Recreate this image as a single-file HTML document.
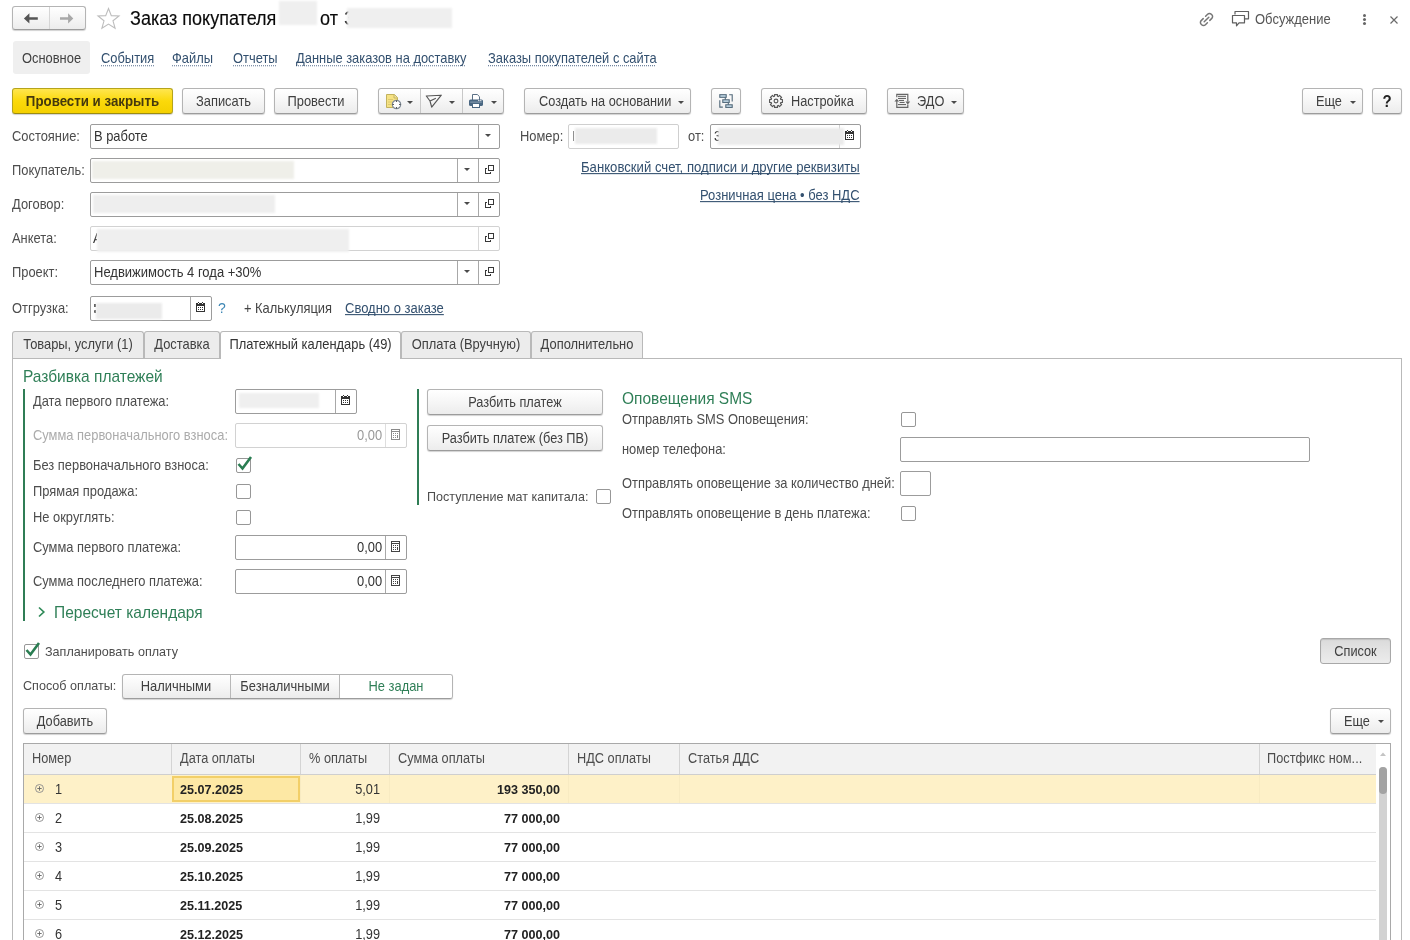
<!DOCTYPE html>
<html><head><meta charset="utf-8">
<style>
html,body{margin:0;padding:0;}
body{width:1410px;height:940px;overflow:hidden;background:#fff;position:relative;font-family:"Liberation Sans",sans-serif;font-size:12.9px;color:#4d4d4d;}
.a{position:absolute;}
.t{position:absolute;white-space:nowrap;line-height:15px;height:15px;}
.lk{color:#33506f;}
.dot{text-decoration:underline dotted #5a7090;text-decoration-thickness:1px;text-underline-offset:2px;text-decoration-skip-ink:none;}
.ul{text-decoration:underline;text-underline-offset:1px;text-decoration-skip-ink:none;}
.btn{position:absolute;box-sizing:border-box;padding-top:1px;border:1px solid #b4b4b4;border-bottom-color:#9c9c9c;border-radius:3px;background:linear-gradient(#ffffff,#f6f6f6 50%,#ececec);box-shadow:0 1px 1px rgba(0,0,0,.18);text-align:center;line-height:23px;color:#404040;white-space:nowrap;}
.fld{position:absolute;box-sizing:border-box;border:1px solid #9c9c9c;border-radius:2px;background:#fff;}
.dis{border-color:#d2d2d2;}
.blur{position:absolute;background:#ececec;filter:blur(1px);}
.cb{position:absolute;box-sizing:border-box;width:15px;height:15px;border:1px solid #979797;border-radius:2px;background:#fff;}
.dd{position:absolute;width:0;height:0;border-left:3px solid transparent;border-right:3px solid transparent;border-top:3px solid #4a4a4a;margin-left:1px;}
.vl{position:absolute;width:1px;background:#a8a8a8;}
.grn{color:#2f7f57;}
.tab{position:absolute;box-sizing:border-box;top:331px;height:27px;border:1px solid #b9b9b9;border-bottom:none;border-radius:3px 3px 0 0;background:#ececec;line-height:26px;text-align:center;color:#404040;white-space:nowrap;}
.b{font-weight:bold;}
.t{transform:scaleY(1.08);transform-origin:0 12px;}
.s{display:inline-block;transform:scaleY(1.08);transform-origin:50% 70%;}
</style></head><body>
<svg width="0" height="0" style="position:absolute">
<symbol id="open" viewBox="0 0 12 12"><g fill="#383838" shape-rendering="crispEdges"><rect x="4" y="1" width="6" height="1"/><rect x="4" y="6" width="6" height="1"/><rect x="4" y="1" width="1" height="6"/><rect x="9" y="1" width="1" height="6"/><rect x="1" y="4" width="2" height="1"/><rect x="1" y="4" width="1" height="6"/><rect x="1" y="9" width="6" height="1"/><rect x="6" y="8" width="1" height="2"/></g></symbol>
<symbol id="cal" viewBox="0 0 12 12"><g fill="#333" shape-rendering="crispEdges"><rect x="1" y="2" width="9" height="3"/><rect x="1" y="5" width="1" height="6"/><rect x="9" y="5" width="1" height="6"/><rect x="1" y="10" width="9" height="1"/><rect x="3" y="1" width="1" height="1"/><rect x="7" y="1" width="1" height="1"/><rect x="3" y="6" width="1" height="1"/><rect x="5" y="6" width="1" height="1"/><rect x="7" y="6" width="1" height="1"/><rect x="3" y="8" width="1" height="1"/><rect x="5" y="8" width="1" height="1"/><rect x="7" y="8" width="1" height="1"/><rect x="3" y="2" width="1" height="1" fill="#fff"/><rect x="7" y="2" width="1" height="1" fill="#fff"/></g></symbol>
<symbol id="calc" viewBox="0 0 12 13"><g fill="currentColor" shape-rendering="crispEdges"><rect x="1" y="1" width="9" height="1"/><rect x="1" y="11" width="9" height="1"/><rect x="1" y="1" width="1" height="11"/><rect x="9" y="1" width="1" height="11"/><rect x="1" y="3" width="9" height="1"/><rect x="3" y="5" width="1" height="1"/><rect x="5" y="5" width="1" height="1"/><rect x="7" y="5" width="1" height="1"/><rect x="3" y="7" width="1" height="1"/><rect x="5" y="7" width="1" height="1"/><rect x="7" y="7" width="1" height="3"/><rect x="3" y="9" width="1" height="1"/><rect x="5" y="9" width="1" height="1"/></g></symbol>
</svg>

<!-- ===== header ===== -->
<div class="btn" style="left:12px;top:6px;width:74px;height:24px;border-radius:3px;"></div>
<div class="vl" style="left:49px;top:7px;height:22px;background:#d6d6d6"></div>
<svg class="a" style="left:22px;top:12px" width="17" height="13" viewBox="0 0 17 13"><path d="M1.9 6.4 L7.4 1.2 V5.2 H15.8 V7.7 H7.4 V11.6 Z" fill="#555"/></svg>
<svg class="a" style="left:59px;top:12px" width="16" height="13" viewBox="0 0 16 13"><path d="M14.3 6.4 L9.1 1.2 V5.2 H1 V7.7 H9.1 V11.6 Z" fill="#a8a8a8"/></svg>
<svg class="a" style="left:96px;top:7px" width="25" height="23" viewBox="0 0 25 23"><path d="M12.5 1.5 L15.3 8.6 L23 9 L17 13.8 L19.1 21.3 L12.5 17.1 L5.9 21.3 L8 13.8 L2 9 L9.7 8.6 Z" fill="none" stroke="#bdbdbd" stroke-width="1.1"/></svg>
<div class="t" style="left:130px;top:8px;font-size:19.4px;line-height:20px;height:20px;color:#0a0a0a;transform:scaleX(0.93);transform-origin:0 0;-webkit-text-stroke:0.15px #0a0a0a">Заказ покупателя</div>
<div class="blur" style="left:279px;top:1px;width:38px;height:24px;background:#efefef"></div>
<div class="t" style="left:320px;top:8px;font-size:19.4px;line-height:20px;height:20px;color:#0a0a0a;transform:scaleX(0.93);transform-origin:0 0;-webkit-text-stroke:0.15px #0a0a0a">от</div>
<div class="t" style="left:344px;top:8px;font-size:19.4px;line-height:20px;height:20px;color:#0a0a0a;width:5px;overflow:hidden">З</div>
<div class="blur" style="left:347px;top:8px;width:105px;height:20px;background:#efefef"></div>

<!-- top right -->
<svg class="a" style="left:1198px;top:11px" width="17" height="17" viewBox="0 0 17 17"><g fill="none" stroke="#777" stroke-width="1.5" stroke-linecap="round"><path d="M6.2 10.8 L10.8 6.2"/><path d="M7.6 5.2 L9.6 3.2 a2.6 2.6 0 0 1 3.7 0 l0.5 0.5 a2.6 2.6 0 0 1 0 3.7 L11.8 9.4"/><path d="M9.4 11.8 L7.4 13.8 a2.6 2.6 0 0 1 -3.7 0 l-0.5 -0.5 a2.6 2.6 0 0 1 0 -3.7 L5.2 7.6"/></g></svg>
<svg class="a" style="left:1231px;top:10px" width="19" height="17" viewBox="0 0 19 17"><g fill="none" stroke="#5f5f5f" stroke-width="1.2" stroke-linejoin="round"><path d="M4 4.5 V1.5 H17.5 V8.8 H14"/><path d="M1.5 5.5 H13.5 V12.8 H8 L5.5 15.8 V12.8 H1.5 Z" fill="#fff"/></g></svg>
<div class="t" style="left:1255px;top:12px;font-size:13px;color:#555">Обсуждение</div>
<div class="a" style="left:1363px;top:14px;width:3px;height:3px;border-radius:2px;background:#666;box-shadow:0 4px 0 #666,0 8px 0 #666"></div>
<svg class="a" style="left:1389px;top:15px" width="10" height="10" viewBox="0 0 10 10"><path d="M1.5 1.5 L8.5 8.5 M8.5 1.5 L1.5 8.5" stroke="#6a6a6a" stroke-width="1.2"/></svg>

<!-- nav -->
<div class="a" style="left:13px;top:41px;width:77px;height:33px;background:#efefef;border-radius:3px"></div>
<div class="t" style="left:22px;top:51px;color:#404040">Основное</div>
<div class="t lk" style="left:101px;top:51px"><span class="dot">События</span></div>
<div class="t lk" style="left:172px;top:51px"><span class="dot">Файлы</span></div>
<div class="t lk" style="left:233px;top:51px"><span class="dot">Отчеты</span></div>
<div class="t lk" style="left:296px;top:51px"><span class="dot">Данные заказов на доставку</span></div>
<div class="t lk" style="left:488px;top:51px"><span class="dot">Заказы покупателей с сайта</span></div>

<!-- toolbar -->
<div class="btn b" style="left:12px;top:88px;width:161px;height:26px;background:linear-gradient(#ffe64f,#fbd90a 50%,#f4d000);border-color:#b5a41c;border-bottom-color:#9c8c10;color:#45390e;font-size:13.3px;line-height:24px"><span class="s">Провести и закрыть</span></div>
<div class="btn" style="left:182px;top:88px;width:83px;height:26px;line-height:24px"><span class="s">Записать</span></div>
<div class="btn" style="left:274px;top:88px;width:84px;height:26px;line-height:24px"><span class="s">Провести</span></div>
<div class="btn" style="left:378px;top:88px;width:126px;height:26px"></div>
<div class="vl" style="left:420px;top:89px;height:24px;background:#c8c8c8"></div>
<div class="vl" style="left:462px;top:89px;height:24px;background:#c8c8c8"></div>
<svg class="a" style="left:385px;top:93px" width="17" height="17" viewBox="0 0 17 17"><path d="M1.5 1.5 H9.5 L12.5 4.5 V14.5 H1.5 Z" fill="#f6e283" stroke="#c2b25e" stroke-width="1"/><path d="M9 1.5 V5 H12.5" fill="#efe0a0" stroke="#c2b25e" stroke-width="0.9"/><path d="M3 6.5 H8 M3 9 H7 M3 11.5 H6" stroke="#d9c66e" stroke-width="0.9"/><circle cx="11.5" cy="11.5" r="4.2" fill="#fff" stroke="#7f8a95" stroke-width="1.2"/><path d="M11.5 7.6 V8.8 M11.5 14.2 V15.4 M7.6 11.5 H8.8 M14.2 11.5 H15.4" stroke="#333" stroke-width="1"/></svg>
<div class="dd" style="left:406px;top:101px"></div>
<svg class="a" style="left:425px;top:94px" width="17" height="15" viewBox="0 0 17 15"><path d="M1.3 2 L16.3 1.2 L6.7 13.1 L5 7 Z M5 7 L10.4 4.4" fill="none" stroke="#555" stroke-width="1.15" stroke-linejoin="round" stroke-linecap="round"/></svg>
<div class="dd" style="left:448px;top:101px"></div>
<svg class="a" style="left:467px;top:93px" width="17" height="16" viewBox="0 0 17 16"><path d="M5.5 1.5 H10.3 L12.5 3.7 V7.5 H5.5 Z" fill="#fff" stroke="#5a6f84" stroke-width="1"/><rect x="2" y="6.5" width="14" height="6.5" rx="1.6" fill="#4a6782"/><rect x="3.2" y="8.6" width="11.6" height="1" fill="#8aa0b4"/><rect x="11.2" y="7.1" width="1.2" height="1" fill="#fff"/><rect x="13.2" y="7.1" width="1.2" height="1" fill="#fff"/><rect x="5.5" y="10.5" width="7" height="4" fill="#fff" stroke="#4a6782" stroke-width="1"/></svg>
<div class="dd" style="left:490px;top:101px"></div>

<div class="btn" style="left:524px;top:88px;width:167px;height:26px;line-height:24px;text-align:left;padding-left:14px;font-size:12.75px"><span class="s">Создать на основании</span></div>
<div class="dd" style="left:677px;top:101px"></div>
<div class="btn" style="left:711px;top:88px;width:30px;height:26px"></div>
<svg class="a" style="left:712px;top:88px" width="28" height="26" viewBox="0 0 28 26"><g fill="#c8deec" stroke="#516879" stroke-width="1.1"><rect x="7.8" y="6.7" width="6.4" height="2.6"/><rect x="10.8" y="11.8" width="6.4" height="2.6"/><rect x="13.8" y="16.8" width="6.4" height="2.6"/></g><g fill="none" stroke="#516879" stroke-width="1.1"><path d="M13.3 9.3 V11.8 M16.3 14.4 V16.8"/><path d="M17.2 6.7 H20.2 V13.6"/><path d="M7.8 12.2 V19.1 H10.8"/></g></svg>
<div class="btn" style="left:761px;top:88px;width:106px;height:26px;line-height:24px;text-align:left;padding-left:29px;font-size:12.75px"><span class="s">Настройка</span></div>
<svg class="a" style="left:768px;top:93px" width="16" height="16" viewBox="0 0 16 16"><g fill="none" stroke="#585858" stroke-width="1.15" stroke-linejoin="round"><path d="M6.54 3.22 L6.52 1.57 L9.48 1.57 L9.46 3.22 L10.35 3.59 L11.50 2.40 L13.60 4.50 L12.41 5.65 L12.78 6.54 L14.43 6.52 L14.43 9.48 L12.78 9.46 L12.41 10.35 L13.60 11.50 L11.50 13.60 L10.35 12.41 L9.46 12.78 L9.48 14.43 L6.52 14.43 L6.54 12.78 L5.65 12.41 L4.50 13.60 L2.40 11.50 L3.59 10.35 L3.22 9.46 L1.57 9.48 L1.57 6.52 L3.22 6.54 L3.59 5.65 L2.40 4.50 L4.50 2.40 L5.65 3.59 Z"/><circle cx="8" cy="8" r="1.9"/></g></svg>
<div class="btn" style="left:887px;top:88px;width:77px;height:26px;line-height:24px;text-align:left;padding-left:29px;font-size:12.75px"><span class="s">ЭДО</span></div>
<svg class="a" style="left:893px;top:92px" width="18" height="17" viewBox="0 0 18 17"><g fill="none" stroke="#666" stroke-width="1.2"><path d="M3.8 5.2 V2.4 H14.8 V9.5"/><path d="M14.8 12.6 V15.4 H3.8 V8.6"/></g><g fill="#666"><path d="M1.4 9.6 L3.8 6.8 L6.2 9.6 Z"/><path d="M12.4 9.6 L17.2 9.6 L14.8 12.4 Z"/><rect x="5" y="3.8" width="8" height="1.1"/><rect x="5" y="5.9" width="8" height="1.1"/><rect x="6" y="7.9" width="5" height="1.1"/><rect x="6.6" y="9.9" width="5" height="1.1"/><rect x="5" y="12" width="8" height="1.1"/></g></svg>
<div class="dd" style="left:950px;top:101px"></div>
<div class="btn" style="left:1302px;top:88px;width:61px;height:26px;line-height:24px;text-align:left;padding-left:13px;font-size:12.75px"><span class="s">Еще</span></div>
<div class="dd" style="left:1349px;top:101px"></div>
<div class="btn b" style="left:1372px;top:88px;width:30px;height:26px;line-height:24px;color:#222;font-size:15px"><span class="s">?</span></div>

<!-- ===== form fields ===== -->
<div class="t" style="left:12px;top:129px">Состояние:</div>
<div class="fld" style="left:90px;top:124px;width:410px;height:25px"></div>
<div class="vl" style="left:478px;top:125px;height:23px"></div>
<div class="dd" style="left:484px;top:134px"></div>
<div class="t" style="left:94px;top:129px;color:#333">В работе</div>

<div class="t" style="left:12px;top:163px">Покупатель:</div>
<div class="fld" style="left:90px;top:158px;width:410px;height:25px"></div>
<div class="blur" style="left:92px;top:161px;width:202px;height:18px;background:#efefe9"></div>
<div class="vl" style="left:457px;top:159px;height:23px"></div>
<div class="vl" style="left:478px;top:159px;height:23px"></div>
<div class="dd" style="left:463px;top:168px"></div>

<div class="t" style="left:12px;top:197px">Договор:</div>
<div class="fld" style="left:90px;top:192px;width:410px;height:25px"></div>
<div class="blur" style="left:93px;top:195px;width:182px;height:18px;background:#eeeeee"></div>
<div class="vl" style="left:457px;top:193px;height:23px"></div>
<div class="vl" style="left:478px;top:193px;height:23px"></div>
<div class="dd" style="left:463px;top:202px"></div>

<div class="t" style="left:12px;top:231px">Анкета:</div>
<div class="fld dis" style="left:90px;top:226px;width:410px;height:25px"></div>
<div class="vl" style="left:478px;top:227px;height:23px;background:#d8d8d8"></div>
<div class="t" style="left:93px;top:231px;width:4px;overflow:hidden;color:#333">А</div>
<div class="blur" style="left:97px;top:229px;width:252px;height:23px;background:#efefef"></div>

<div class="t" style="left:12px;top:265px">Проект:</div>
<div class="fld" style="left:90px;top:260px;width:410px;height:25px"></div>
<div class="vl" style="left:457px;top:261px;height:23px"></div>
<div class="vl" style="left:478px;top:261px;height:23px"></div>
<div class="dd" style="left:463px;top:270px"></div>
<div class="t" style="left:94px;top:265px;color:#333;font-size:13px">Недвижимость 4 года +30%</div>

<div class="t" style="left:12px;top:301px">Отгрузка:</div>
<div class="fld" style="left:90px;top:296px;width:122px;height:25px"></div>
<div class="vl" style="left:190px;top:297px;height:23px"></div>
<div class="a" style="left:94px;top:304px;width:2px;height:3px;background:#555"></div><div class="a" style="left:94px;top:310px;width:2px;height:3px;background:#555;border-radius:1px 0 0 1px"></div><div class="blur" style="left:96px;top:303px;width:66px;height:16px;background:#ebebeb"></div>
<div class="t" style="left:218px;top:301px;color:#3e87b5;font-size:14px">?</div>
<div class="t" style="left:244px;top:301px;color:#444">+ Калькуляция</div>
<div class="t lk ul" style="left:345px;top:301px;font-size:13px">Сводно о заказе</div>

<div class="t" style="left:520px;top:129px">Номер:</div>
<div class="fld dis" style="left:568px;top:124px;width:111px;height:25px;border-color:#cfcfcf"></div>
<div class="a" style="left:573px;top:131px;width:1px;height:10px;background:#888"></div><div class="blur" style="left:575px;top:128px;width:82px;height:16px;background:#ebebeb"></div>
<div class="t" style="left:688px;top:129px">от:</div>
<div class="fld" style="left:710px;top:124px;width:151px;height:25px"></div>
<div class="vl" style="left:839px;top:125px;height:23px;background:#d0d0d0"></div>
<div class="t" style="left:714px;top:129px;color:#333;width:5px;overflow:hidden">3</div>
<div class="blur" style="left:718px;top:128px;width:126px;height:17px;background:#ebebeb"></div>
<div class="t lk ul" style="left:581px;top:160px;font-size:13.15px">Банковский счет, подписи и другие реквизиты</div>
<div class="t lk ul" style="left:700px;top:188px;font-size:13px">Розничная цена • без НДС</div>

<!-- ===== tabs ===== -->
<div class="a" style="left:12px;top:358px;width:1390px;height:600px;box-sizing:border-box;border:1px solid #b9b9b9;background:#fff"></div>
<div class="tab" style="left:12px;width:132px"><span class="s">Товары, услуги (1)</span></div>
<div class="tab" style="left:144px;width:76px"><span class="s">Доставка</span></div>
<div class="tab" style="left:220px;width:181px;height:28px;background:#fff;color:#333"><span class="s">Платежный календарь (49)</span></div>
<div class="tab" style="left:401px;width:130px"><span class="s">Оплата (Вручную)</span></div>
<div class="tab" style="left:531px;width:112px"><span class="s">Дополнительно</span></div>

<div class="t grn" style="left:23px;top:368px;font-size:15.5px;line-height:17px;height:17px">Разбивка платежей</div>
<div class="a" style="left:23px;top:389px;width:2px;height:232px;background:#2f7d55"></div>
<div class="t" style="left:33px;top:394px">Дата первого платежа:</div>
<div class="fld" style="left:235px;top:389px;width:122px;height:25px"></div>
<div class="vl" style="left:335px;top:390px;height:23px"></div>
<div class="blur" style="left:239px;top:393px;width:80px;height:15px;background:#efefef"></div>
<svg class="a" style="left:340px;top:394px" width="12" height="12"><use href="#cal"/></svg>

<div class="t" style="left:33px;top:428px;color:#ababab">Сумма первоначального взноса:</div>
<div class="fld dis" style="left:235px;top:423px;width:172px;height:25px"></div>
<div class="vl" style="left:385px;top:424px;height:23px;background:#dedede"></div>
<div class="t" style="left:357px;top:428px;color:#9a9a9a">0,00</div>

<div class="t" style="left:33px;top:458px">Без первоначального взноса:</div>
<div class="cb" style="left:236px;top:458px"></div>
<svg class="a" style="left:236px;top:454px" width="17" height="18" viewBox="0 0 17 18"><path d="M2.5 10 L6.5 14.5 L15 3" fill="none" stroke="#2a7d52" stroke-width="2.6"/></svg>

<div class="t" style="left:33px;top:484px">Прямая продажа:</div>
<div class="cb" style="left:236px;top:484px"></div>
<div class="t" style="left:33px;top:510px">Не округлять:</div>
<div class="cb" style="left:236px;top:510px"></div>

<div class="t" style="left:33px;top:540px">Сумма первого платежа:</div>
<div class="fld" style="left:235px;top:535px;width:172px;height:25px"></div>
<div class="vl" style="left:385px;top:536px;height:23px"></div>
<div class="t" style="left:357px;top:540px;color:#333">0,00</div>

<div class="t" style="left:33px;top:574px">Сумма последнего платежа:</div>
<div class="fld" style="left:235px;top:569px;width:172px;height:25px"></div>
<div class="vl" style="left:385px;top:570px;height:23px"></div>
<div class="t" style="left:357px;top:574px;color:#333">0,00</div>

<svg class="a" style="left:37px;top:606px" width="9" height="12" viewBox="0 0 9 12"><path d="M2 1.5 L6.8 6 L2 10.5" fill="none" stroke="#2f8a58" stroke-width="1.7"/></svg>
<div class="t grn" style="left:54px;top:604px;font-size:15.5px;line-height:17px;height:17px">Пересчет календаря</div>

<div class="a" style="left:417px;top:389px;width:2px;height:116px;background:#2f7d55"></div>
<div class="btn" style="left:427px;top:389px;width:176px;height:26px;line-height:24px;font-size:12.75px"><span class="s">Разбить платеж</span></div>
<div class="btn" style="left:427px;top:425px;width:176px;height:26px;line-height:24px;font-size:12.75px"><span class="s">Разбить платеж (без ПВ)</span></div>
<div class="t" style="left:427px;top:490px;font-size:12.55px">Поступление мат капитала:</div>
<div class="cb" style="left:596px;top:489px"></div>

<div class="t grn" style="left:622px;top:390px;font-size:15.5px;line-height:17px;height:17px">Оповещения SMS</div>
<div class="t" style="left:622px;top:412px">Отправлять SMS Оповещения:</div>
<div class="cb" style="left:901px;top:412px"></div>
<div class="t" style="left:622px;top:442px">номер телефона:</div>
<div class="fld" style="left:900px;top:437px;width:410px;height:25px"></div>
<div class="t" style="left:622px;top:476px">Отправлять оповещение за количество дней:</div>
<div class="fld" style="left:900px;top:471px;width:31px;height:25px"></div>
<div class="t" style="left:622px;top:506px">Отправлять оповещение в день платежа:</div>
<div class="cb" style="left:901px;top:506px"></div>

<!-- plan -->
<div class="cb" style="left:24px;top:644px"></div>
<svg class="a" style="left:24px;top:640px" width="17" height="18" viewBox="0 0 17 18"><path d="M2.5 10 L6.5 14.5 L15 3" fill="none" stroke="#2a7d52" stroke-width="2.6"/></svg>
<div class="t" style="left:45px;top:645px;font-size:12.6px">Запланировать оплату</div>
<div class="btn" style="left:1320px;top:638px;width:71px;height:26px;line-height:24px;background:linear-gradient(#dadada,#e4e4e4 50%,#ececec);border-color:#a8a8a8;box-shadow:inset 0 1px 1px rgba(0,0,0,.12);font-size:12.75px"><span class="s">Список</span></div>

<div class="t" style="left:23px;top:679px;font-size:12.6px">Способ оплаты:</div>
<div class="btn" style="left:122px;top:674px;width:331px;height:25px;"></div>
<div class="a" style="left:340px;top:675px;width:112px;height:23px;background:#fff;border-radius:0 2px 2px 0"></div>
<div class="vl" style="left:230px;top:675px;height:23px;background:#b8b8b8"></div>
<div class="vl" style="left:339px;top:675px;height:23px;background:#b8b8b8"></div>
<div class="t" style="left:122px;top:679px;width:108px;text-align:center;color:#404040">Наличными</div>
<div class="t" style="left:231px;top:679px;width:108px;text-align:center;color:#404040">Безналичными</div>
<div class="t grn" style="left:340px;top:679px;width:112px;text-align:center">Не задан</div>

<div class="btn" style="left:23px;top:708px;width:84px;height:26px;line-height:24px;font-size:12.75px"><span class="s">Добавить</span></div>
<div class="btn" style="left:1330px;top:708px;width:61px;height:26px;line-height:24px;text-align:left;padding-left:13px;font-size:12.75px"><span class="s">Еще</span></div>
<div class="dd" style="left:1377px;top:720px"></div>
<!-- ===== grid ===== -->
<div class="a" style="left:23px;top:743px;width:1368px;height:220px;box-sizing:border-box;border:1px solid #a9a9a9;background:#fff"></div>
<div class="a" style="left:24px;top:744px;width:1352px;height:30px;background:#f2f2f2;border-bottom:1px solid #cfcfcf"></div>
<div class="vl" style="left:171px;top:744px;height:30px;background:#d4d4d4"></div>
<div class="vl" style="left:300px;top:744px;height:30px;background:#d4d4d4"></div>
<div class="vl" style="left:389px;top:744px;height:30px;background:#d4d4d4"></div>
<div class="vl" style="left:568px;top:744px;height:30px;background:#d4d4d4"></div>
<div class="vl" style="left:679px;top:744px;height:30px;background:#d4d4d4"></div>
<div class="vl" style="left:1259px;top:744px;height:30px;background:#d4d4d4"></div>
<div class="t" style="left:32px;top:751px;font-size:12.75px">Номер</div>
<div class="t" style="left:180px;top:751px;font-size:12.75px">Дата оплаты</div>
<div class="t" style="left:309px;top:751px;font-size:12.75px">% оплаты</div>
<div class="t" style="left:398px;top:751px;font-size:12.75px">Сумма оплаты</div>
<div class="t" style="left:577px;top:751px;font-size:12.75px">НДС оплаты</div>
<div class="t" style="left:688px;top:751px;font-size:12.75px">Статья ДДС</div>
<div class="t" style="left:1267px;top:751px;font-size:12.75px">Постфикс ном...</div>
<div class="a" style="left:24px;top:775px;width:1352px;height:28px;background:#fef1c8"></div>
<div class="vl" style="left:300px;top:775px;height:28px;background:#f8ebc2"></div>
<div class="vl" style="left:389px;top:775px;height:28px;background:#f8ebc2"></div>
<div class="vl" style="left:568px;top:775px;height:28px;background:#f8ebc2"></div>
<div class="vl" style="left:679px;top:775px;height:28px;background:#f8ebc2"></div>
<div class="vl" style="left:1259px;top:775px;height:28px;background:#f8ebc2"></div>
<div class="a" style="left:172px;top:776px;width:128px;height:26px;box-sizing:border-box;border:2px solid #f2cf68;background:#fde8a4"></div>
<div class="a" style="left:24px;top:803px;width:1352px;height:1px;background:#e3e3e3"></div>
<svg class="a" style="left:35px;top:784px" width="10" height="10" viewBox="0 0 10 10"><circle cx="4.5" cy="4.5" r="4" fill="none" stroke="#8a8a8a" stroke-width="0.9"/><path d="M4.5 2.3 V6.7 M2.3 4.5 H6.7" stroke="#666" stroke-width="0.9"/></svg>
<div class="t" style="left:55px;top:782px;color:#333;font-size:12.75px">1</div>
<div class="t b" style="left:180px;top:783px;color:#222;font-size:12.6px">25.07.2025</div>
<div class="t" style="left:300px;top:782px;width:80px;text-align:right;color:#333;font-size:12.75px">5,01</div>
<div class="t b" style="left:400px;top:783px;width:160px;text-align:right;color:#222;font-size:12.6px">193 350,00</div>
<div class="a" style="left:24px;top:832px;width:1352px;height:1px;background:#e3e3e3"></div>
<svg class="a" style="left:35px;top:813px" width="10" height="10" viewBox="0 0 10 10"><circle cx="4.5" cy="4.5" r="4" fill="none" stroke="#8a8a8a" stroke-width="0.9"/><path d="M4.5 2.3 V6.7 M2.3 4.5 H6.7" stroke="#666" stroke-width="0.9"/></svg>
<div class="t" style="left:55px;top:811px;color:#333;font-size:12.75px">2</div>
<div class="t b" style="left:180px;top:812px;color:#222;font-size:12.6px">25.08.2025</div>
<div class="t" style="left:300px;top:811px;width:80px;text-align:right;color:#333;font-size:12.75px">1,99</div>
<div class="t b" style="left:400px;top:812px;width:160px;text-align:right;color:#222;font-size:12.6px">77 000,00</div>
<div class="a" style="left:24px;top:861px;width:1352px;height:1px;background:#e3e3e3"></div>
<svg class="a" style="left:35px;top:842px" width="10" height="10" viewBox="0 0 10 10"><circle cx="4.5" cy="4.5" r="4" fill="none" stroke="#8a8a8a" stroke-width="0.9"/><path d="M4.5 2.3 V6.7 M2.3 4.5 H6.7" stroke="#666" stroke-width="0.9"/></svg>
<div class="t" style="left:55px;top:840px;color:#333;font-size:12.75px">3</div>
<div class="t b" style="left:180px;top:841px;color:#222;font-size:12.6px">25.09.2025</div>
<div class="t" style="left:300px;top:840px;width:80px;text-align:right;color:#333;font-size:12.75px">1,99</div>
<div class="t b" style="left:400px;top:841px;width:160px;text-align:right;color:#222;font-size:12.6px">77 000,00</div>
<div class="a" style="left:24px;top:890px;width:1352px;height:1px;background:#e3e3e3"></div>
<svg class="a" style="left:35px;top:871px" width="10" height="10" viewBox="0 0 10 10"><circle cx="4.5" cy="4.5" r="4" fill="none" stroke="#8a8a8a" stroke-width="0.9"/><path d="M4.5 2.3 V6.7 M2.3 4.5 H6.7" stroke="#666" stroke-width="0.9"/></svg>
<div class="t" style="left:55px;top:869px;color:#333;font-size:12.75px">4</div>
<div class="t b" style="left:180px;top:870px;color:#222;font-size:12.6px">25.10.2025</div>
<div class="t" style="left:300px;top:869px;width:80px;text-align:right;color:#333;font-size:12.75px">1,99</div>
<div class="t b" style="left:400px;top:870px;width:160px;text-align:right;color:#222;font-size:12.6px">77 000,00</div>
<div class="a" style="left:24px;top:919px;width:1352px;height:1px;background:#e3e3e3"></div>
<svg class="a" style="left:35px;top:900px" width="10" height="10" viewBox="0 0 10 10"><circle cx="4.5" cy="4.5" r="4" fill="none" stroke="#8a8a8a" stroke-width="0.9"/><path d="M4.5 2.3 V6.7 M2.3 4.5 H6.7" stroke="#666" stroke-width="0.9"/></svg>
<div class="t" style="left:55px;top:898px;color:#333;font-size:12.75px">5</div>
<div class="t b" style="left:180px;top:899px;color:#222;font-size:12.6px">25.11.2025</div>
<div class="t" style="left:300px;top:898px;width:80px;text-align:right;color:#333;font-size:12.75px">1,99</div>
<div class="t b" style="left:400px;top:899px;width:160px;text-align:right;color:#222;font-size:12.6px">77 000,00</div>
<div class="a" style="left:24px;top:948px;width:1352px;height:1px;background:#e3e3e3"></div>
<svg class="a" style="left:35px;top:929px" width="10" height="10" viewBox="0 0 10 10"><circle cx="4.5" cy="4.5" r="4" fill="none" stroke="#8a8a8a" stroke-width="0.9"/><path d="M4.5 2.3 V6.7 M2.3 4.5 H6.7" stroke="#666" stroke-width="0.9"/></svg>
<div class="t" style="left:55px;top:927px;color:#333;font-size:12.75px">6</div>
<div class="t b" style="left:180px;top:928px;color:#222;font-size:12.6px">25.12.2025</div>
<div class="t" style="left:300px;top:927px;width:80px;text-align:right;color:#333;font-size:12.75px">1,99</div>
<div class="t b" style="left:400px;top:928px;width:160px;text-align:right;color:#222;font-size:12.6px">77 000,00</div>
<svg class="a" style="left:1379px;top:751px" width="8" height="6" viewBox="0 0 8 6"><path d="M1 5 L4 1.5 L7 5 Z" fill="#c4c4c4"/></svg>
<div class="a" style="left:1379px;top:767px;width:8px;height:180px;background:#d2d2d2;border-radius:4px 4px 0 0"></div>
<div class="a" style="left:1379px;top:767px;width:8px;height:27px;background:#a3a3a3;border-radius:4px"></div>

<!-- field icons -->
<svg class="a" style="left:484px;top:164px" width="12" height="12"><use href="#open"/></svg>
<svg class="a" style="left:484px;top:198px" width="12" height="12"><use href="#open"/></svg>
<svg class="a" style="left:484px;top:232px" width="12" height="12"><use href="#open"/></svg>
<svg class="a" style="left:484px;top:266px" width="12" height="12"><use href="#open"/></svg>
<svg class="a" style="left:195px;top:301px" width="12" height="12"><use href="#cal"/></svg>
<svg class="a" style="left:844px;top:129px" width="12" height="12"><use href="#cal"/></svg>
<svg class="a" style="left:390px;top:428px;color:#8a8a8a" width="12" height="13"><use href="#calc"/></svg>
<svg class="a" style="left:390px;top:540px;color:#444" width="12" height="13"><use href="#calc"/></svg>
<svg class="a" style="left:390px;top:574px;color:#444" width="12" height="13"><use href="#calc"/></svg>
</body></html>
